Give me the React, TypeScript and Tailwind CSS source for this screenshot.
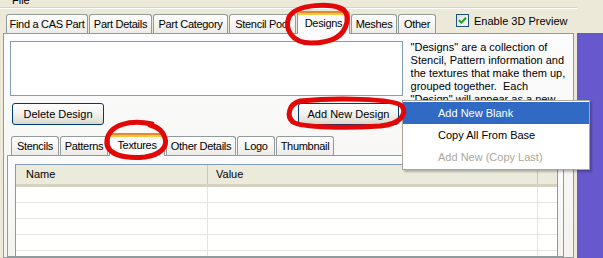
import React from 'react'

const mainTabs = [
  { label: 'Find a CAS Part', w: 'w-[82px]' },
  { label: 'Part Details', w: 'w-[63px]' },
  { label: 'Part Category', w: 'w-[75px]' },
  { label: 'Stencil Pool', w: 'w-[67px]' },
]

const subTabs = [
  { label: 'Stencils', w: 'w-[48px]', active: false },
  { label: 'Patterns', w: 'w-[48px]', active: false },
  { label: 'Textures', w: 'w-[56px]', active: true },
  { label: 'Other Details', w: 'w-[70px]', active: false },
  { label: 'Logo', w: 'w-[38px]', active: false },
  { label: 'Thumbnail', w: 'w-[58px]', active: false },
]

function Tab({ label, w, active }: { label: string; w: string; active?: boolean }) {
  if (active) {
    return (
      <div
        className={`${w} h-[23px] shrink-0 -mb-px relative z-10 flex flex-col rounded-t-[3px] border border-b-0 border-[#919B9C] bg-[#FCFCFE] overflow-hidden`}
      >
        <div className="h-px bg-[#E68B2C]" />
        <div className="h-[2px] bg-[#FFC73C]" />
        <div className="flex-1 flex items-center justify-center whitespace-nowrap tracking-[-0.3px] pb-[2px]">{label}</div>
      </div>
    )
  }
  return (
    <div
      className={`${w} h-[19px] shrink-0 flex items-center justify-center whitespace-nowrap tracking-[-0.3px] overflow-hidden rounded-t-[3px] border border-b-0 border-[#919B9C] bg-gradient-to-b from-white to-[#ECEBE6]`}
    >
      {label}
    </div>
  )
}

function XpButton({ label, className }: { label: string; className: string }) {
  return (
    <div
      className={`${className} h-[22px] shrink-0 flex items-center justify-center rounded-[3px] border border-[#003C74] bg-gradient-to-b from-white via-[#F3F2EE] to-[#DCD8CC]`}
    >
      {label}
    </div>
  )
}

export default function App() {
  const rows = [0, 1, 2, 3, 4]

  return (
    <div className="w-[603px] h-[258px] overflow-hidden relative flex bg-[#ECE9D8] text-black text-[11px] font-['Liberation_Sans',Arial,sans-serif]">
      <div className="w-[577px] h-[258px] flex flex-col">
        {/* menu bar, cut off */}
        <div className="h-[8px] shrink-0 overflow-hidden border-b border-[#D8D4C6]">
          <div className="pl-[12px] leading-[12px] -mt-[6px]">File</div>
        </div>
        <div className="h-px shrink-0 bg-white" />

        {/* main tabs */}
        <div className="h-[24px] shrink-0 flex items-end pl-[6px] gap-px">
          {mainTabs.map((t) => (
            <Tab key={t.label} label={t.label} w={t.w} />
          ))}
          <Tab label="Designs" w="w-[53px]" active />
          <Tab label="Meshes" w="w-[46px]" />
          <Tab label="Other" w="w-[38px]" />
          <div className="ml-[19px] mb-[4px] flex items-center gap-[5px] shrink-0">
            <div className="w-[13px] h-[13px] border border-[#1C5180] bg-gradient-to-br from-[#DCDCD7] to-white flex items-center justify-center">
              <svg width="9" height="9" viewBox="0 0 9 9">
                <path d="M1 4.2 L3.4 6.6 L8 1.8" fill="none" stroke="#21A121" strokeWidth="2" />
              </svg>
            </div>
            <span className="whitespace-nowrap">Enable 3D Preview</span>
          </div>
        </div>

        {/* main tab page */}
        <div className="ml-[3px] w-[571px] flex-1 min-h-0 flex flex-col border border-[#919B9C] bg-gradient-to-b from-[#FCFCFE] to-[#F4F3EE]">
          <div className="flex shrink-0 pt-[7px]">
            <div className="ml-[6px] w-[394px] h-[55px] border border-[#7F9DB9] bg-white" />
            <div className="ml-[8px] w-[163px] h-[55px] leading-[13px] overflow-visible">
              <p>"Designs" are a collection of</p>
              <p>Stencil, Pattern information and</p>
              <p>the textures that make them up,</p>
              <p className="whitespace-pre">grouped together.  Each</p>
              <p>"Design" will appear as a new</p>
            </div>
          </div>

          <div className="flex shrink-0 mt-[7px] relative z-10">
            <XpButton label="Delete Design" className="ml-[8px] w-[92px]" />
            <XpButton label="Add New Design" className="ml-[194px] w-[101px]" />
          </div>

          <div className="h-[30px] shrink-0 flex items-end ml-[3px] pl-[4px] gap-px">
            {subTabs.map((t) => (
              <Tab key={t.label} label={t.label} w={t.w} active={t.active} />
            ))}
          </div>

          {/* sub tab page */}
          <div className="ml-[3px] w-[557px] flex-1 min-h-0 overflow-hidden border border-[#919B9C] bg-gradient-to-b from-[#FCFCFE] to-[#F4F3EE] pt-[8px] pl-[7px]">
            <div className="w-[543px] h-[120px] border border-[#7F9DB9] bg-white">
              <div className="h-[22px] flex bg-[#EBEADB] border-b-[3px] border-[#D6D2C2]">
                <div className="w-[192px] pl-[10px] flex items-center border-r border-[#CBC7B8]">Name</div>
                <div className="w-[330px] pl-[8px] flex items-center border-r border-[#CBC7B8]">Value</div>
                <div className="flex-1" />
              </div>
              {rows.map((r) => (
                <div key={r} className="h-[16px] flex border-b border-[#E6E5DF]">
                  <div className="w-[192px] border-r border-[#E6E5DF]" />
                  <div className="w-[330px] border-r border-[#E6E5DF]" />
                  <div className="flex-1" />
                </div>
              ))}
            </div>
          </div>
        </div>
      </div>

      {/* right edge desktop */}
      <div className="flex-1 flex flex-col">
        <div className="h-[33px] shrink-0" />
        <div className="flex-1 bg-[#6759CD]" />
      </div>

      {/* drop-down menu */}
      <div className="absolute left-[402px] top-[100px] w-[188px] h-[70px] bg-white border border-[#ACA899] shadow-[2px_2px_2px_rgba(0,0,0,0.25)] z-20 py-px">
        <div className="h-[22px] flex items-center pl-[35px] bg-[#316AC5] text-white">Add New Blank</div>
        <div className="h-[22px] flex items-center pl-[35px]">Copy All From Base</div>
        <div className="h-[22px] flex items-center pl-[35px] text-[#ACA899]">Add New (Copy Last)</div>
      </div>

      {/* red marker circles */}
      <svg className="absolute inset-0 pointer-events-none z-30" width="603" height="258" viewBox="0 0 603 258">
        <g fill="none" stroke="#E20808" strokeWidth="5" strokeLinecap="round">
          <path d="M344 10 C334 2 296 4 289 17 C284 29 292 43 311 43 C330 43 344 37 347 22 C348 14 345 9 339 8" />
          <path d="M152 124 C130 119 109 125 107 140 C105 155 125 159 145 157 C160 155 168 147 165 138 C163 131 158 127 150 125" />
          <path d="M300 101 C332 98 394 98 402 106 C407 114 401 124 380 126 C350 128 302 128 293 122 C286 116 289 104 300 101" />
        </g>
      </svg>
    </div>
  )
}
